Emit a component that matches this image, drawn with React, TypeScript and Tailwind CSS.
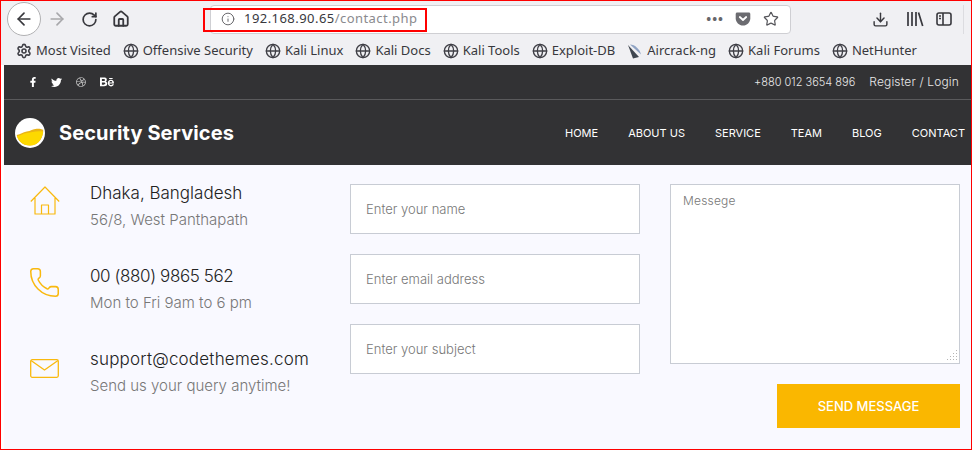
import React from 'react';
import { ArrowLeft, ArrowRight, RotateCw, House, Info, Star, Download, Settings, Globe, Phone } from 'lucide-react';
import { FaFacebookF, FaTwitter, FaDribbble, FaBehance } from 'react-icons/fa';

const bookmarks = ['Offensive Security', 'Kali Linux', 'Kali Docs', 'Kali Tools', 'Exploit-DB'];
const navItems = ['HOME', 'ABOUT US', 'SERVICE', 'TEAM', 'BLOG', 'CONTACT'];

const Bookmark = ({ label }: { label: string }) => (
  <div className="flex items-center gap-[4px]">
    <Globe size={16} strokeWidth={2} className="text-[#3f3f46]" />
    <span>{label}</span>
  </div>
);

const Toolbar = () => (
  <div className="bg-[#f0f0f3] text-[#38383d]">
    <div className="flex h-[36px] items-center pl-[6px]">
      <div className="flex h-[34px] w-[34px] items-center justify-center rounded-full border border-[#b1b1b3] bg-white">
        <ArrowLeft size={20} strokeWidth={2} />
      </div>
      <ArrowRight size={20} strokeWidth={2} className="ml-[6px] text-[#a8a8ab]" />
      <RotateCw size={17} strokeWidth={2.4} className="ml-[14px]" />
      <House size={18} strokeWidth={2.4} className="ml-[14px]" />
      <div className="ml-[80px] flex h-[29px] w-[581px] items-center rounded border border-[#cfcfd3] bg-white pl-[10px] pr-[6px]">
        <Info size={14} strokeWidth={1.6} className="text-[#5f5f63]" />
        <span className="ml-[9px] text-[13px] tracking-[0.45px]">
          192.168.90.65<span className="text-[#8a8a8e]">/contact.php</span>
        </span>
        <div className="ml-auto flex items-center">
          <span className="text-[13px] font-bold leading-none tracking-[1px] text-[#66666a]">•••</span>
          <svg viewBox="0 0 16 16" className="ml-[11px] h-4 w-4" fill="#6b6b70">
            <path d="M2.2 1.5h11.6c.9 0 1.5.7 1.5 1.5v4.2c0 4-3.3 7.3-7.3 7.3S.7 11.200.7 7.200V3c0-.8.6-1.500 1.500-1.500z" />
            <path d="M4.800 6l3.200 3 3.200-3" stroke="#fff" strokeWidth="1.800" fill="none" strokeLinecap="round" strokeLinejoin="round" />
          </svg>
          <Star size={16} strokeWidth={1.8} className="ml-[12px] mr-[5px] text-[#55555a]" />
        </div>
      </div>
      <Download size={17} strokeWidth={2} className="ml-[81px]" />
      <svg viewBox="0 0 18 16" className="ml-[17px] h-4 w-[18px]" stroke="currentColor" strokeWidth="1.700" fill="none">
        <path d="M2 1v14M6 1v14M10 1v14M12.500 1.500l4.200 13.500" />
      </svg>
      <svg viewBox="0 0 16 16" className="ml-[12px] h-4 w-4" stroke="currentColor" strokeWidth="1.600" fill="none">
        <rect x="1" y="2" width="14" height="12" rx="2" />
        <path d="M7 2v12M3 5h2M3 7.500h2" />
      </svg>
      <div className="ml-[11px] h-[29px] w-px bg-[#dcdce0]" />
    </div>
    <div className="flex h-[28px] items-center gap-[12px] pl-[15px] text-[13px]">
      <div className="flex items-center gap-[4px]">
        <Settings size={16} strokeWidth={2.4} className="text-[#3f3f46]" />
        <span>Most Visited</span>
      </div>
      {bookmarks.map((b) => (
        <Bookmark key={b} label={b} />
      ))}
      <div className="flex items-center gap-[4px]">
        <svg viewBox="0 0 16 16" className="h-4 w-4">
          <path d="M1 2l11 12-6 1.500z" fill="#3f4650" />
          <path d="M3 1.500c5 0 10 5 11 10z" fill="#8fa3c4" />
        </svg>
        <span>Aircrack-ng</span>
      </div>
      <Bookmark label="Kali Forums" />
      <Bookmark label="NetHunter" />
    </div>
  </div>
);

const Logo = () => (
  <svg viewBox="0 0 30 30" className="h-[30px] w-[30px]">
    <circle cx="15" cy="15" r="15" fill="#fff" />
    <path d="M1.700 17c4-.5 6-3 10-3.500 4-.5 6-2.500 10-2.800 2.500-.2 5 .3 6.500 1 .5 6-3.500 15.800-13.200 15.800C7 27.500 2.700 22.500 1.700 17z" fill="#eab416" />
    <path d="M2 18c4-.5 6-2.500 10-3 5-.6 8-2.500 16-1.500-.4 6-4.500 14-13 14-6.500 0-11.500-4.500-13-9.500z" fill="#fdd900" />
  </svg>
);

const Header = () => (
  <div className="bg-[#323234] font-['Inter',sans-serif] text-white">
    <div className="flex h-[35px] items-center justify-between border-b border-[#5a5a5c] pr-[12px] pl-[24px]">
      <div className="flex items-center">
        <FaFacebookF size={10} />
        <FaTwitter size={11} className="ml-[13px]" />
        <FaDribbble size={10} className="ml-[14px] text-[#c9c9c9]" />
        <FaBehance size={14} className="ml-[14px]" />
      </div>
      <div className="flex items-center font-light text-[#e8e8e8]">
        <span className="text-[11px]">+880 012 3654 896</span>
        <span className="ml-[14px] text-[12px] tracking-[0.15px]">Register / Login</span>
      </div>
    </div>
    <div className="flex h-[65px] items-center justify-between pt-[1px] pr-[6px] pl-[11px]">
      <div className="flex items-center gap-[14px]">
        <Logo />
        <span className="text-[20px] font-bold tracking-[0.1px]">Security Services</span>
      </div>
      <nav className="flex gap-[30px] text-[11px]">
        {navItems.map((n) => (
          <span key={n}>{n}</span>
        ))}
      </nav>
    </div>
  </div>
);

const contacts = [
  { title: 'Dhaka, Bangladesh', sub: '56/8, West Panthapath', icon: 'home', tracking: 'tracking-normal' },
  { title: '00 (880) 9865 562', sub: 'Mon to Fri 9am to 6 pm', icon: 'phone', tracking: 'tracking-[-0.4px]' },
  { title: 'support@codethemes.com', sub: 'Send us your query anytime!', icon: 'mail', tracking: 'tracking-[0.2px]' },
];

const ContactIcon = ({ name }: { name: string }) => {
  if (name === 'home')
    return (
      <svg viewBox="0 0 30 29" className="mt-[2px] h-[29px] w-[30px]" fill="none" stroke="#f9b90f" strokeWidth="1.200" strokeLinejoin="round">
        <path d="M.8 15.500L15 1l14.200 14.500M5 12v16h20V12M11.500 28v-9h7v9" />
      </svg>
    );
  if (name === 'phone') return <Phone size={33} strokeWidth={1.1} className="-mt-[1px] -ml-[2px] text-[#f9b90f]" />;
  return (
    <svg viewBox="0 0 29 19" className="mt-[9px] h-[19px] w-[29px]" fill="none" stroke="#f9b90f" strokeWidth="1.300" strokeLinejoin="round">
      <rect x=".7" y=".7" width="27.600" height="17.600" rx="1.500" />
      <path d="M1 1.500l13.500 9.500L28 1.500" />
    </svg>
  );
};

const Field = ({ placeholder }: { placeholder: string }) => (
  <div className="flex h-[50px] items-center border border-[#c8ccd4] bg-white pt-[2px] pl-[15px] text-[13px] font-light text-[#777]">
    {placeholder}
  </div>
);

const ContactSection = () => (
  <div className="grid h-[284px] grid-cols-[346px_290px_320px] bg-[#f9f9ff] pt-[19px] font-['Inter',sans-serif] font-light">
    <div className="-mt-[2px] flex flex-col gap-[34px] pl-[26px]">
      {contacts.map((c) => (
        <div key={c.title} className="flex h-[49px]">
          <div className="w-[60px] pt-[2px]">
            <ContactIcon name={c.icon} />
          </div>
          <div>
            <div className={`h-[22px] text-[17px] leading-[22px] text-[#222] ${c.tracking}`}>{c.title}</div>
            <div className="mt-[5px] h-[22px] text-[15px] leading-[22px] text-[#777]">{c.sub}</div>
          </div>
        </div>
      ))}
    </div>
    <div className="flex flex-col gap-[20px]">
      <Field placeholder="Enter your name" />
      <Field placeholder="Enter email address" />
      <Field placeholder="Enter your subject" />
    </div>
    <div className="ml-[30px] flex flex-col items-end">
      <div className="relative h-[180px] w-full border border-[#c8ccd4] bg-white pt-[7px] pl-[12px] text-[12px] tracking-[0.2px] text-[#777]">
        Messege
        <svg viewBox="0 0 12 12" className="absolute right-[1px] bottom-[1px] h-3 w-3" fill="#b5b5b5">
          <path d="M10 0h1v1h-1zM7 3h1v1H7zM10 3h1v1h-1zM4 6h1v1H4zM7 6h1v1H7zM10 6h1v1h-1zM1 9h1v1H1zM4 9h1v1H4zM7 9h1v1H7zM10 9h1v1h-1z" />
        </svg>
      </div>
      <div className="mt-[20px] flex h-[44px] w-[183px] items-center justify-center bg-[#fab700] pt-[1px] text-[13px] font-medium text-white">
        SEND MESSAGE
      </div>
    </div>
  </div>
);

export default function App() {
  return (
    <div className="relative h-[450px] w-[972px] overflow-hidden border border-[#ff0000] font-['Noto_Sans',sans-serif]">
      <div className="h-[64px]">
        <Toolbar />
      </div>
      <div className="ml-[3px]">
        <Header />
        <ContactSection />
      </div>
      {/* red annotation round the address */}
      <div className="absolute top-[7px] left-[202px] h-[24px] w-[224px] border-2 border-[#ff0000]" />
    </div>
  );
}
